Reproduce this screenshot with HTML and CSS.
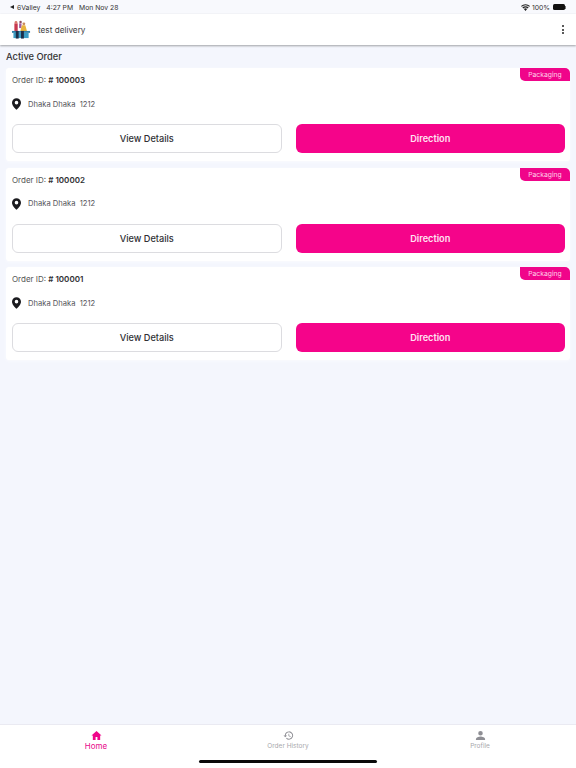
FILE: index.html
```html
<!DOCTYPE html>
<html lang="en">
<head>
<meta charset="utf-8">
<title>Active Order</title>
<link rel="stylesheet" href="styles.css">
</head>
<body>
<div class="app">
  <div class="status">
    <div class="status-left"><span class="back"></span><span>6Valley</span><span class="time">4:27 PM</span><span>Mon Nov 28</span></div>
    <div class="status-right">
      <svg class="wifi" viewBox="0 0 12 9" width="9" height="7"><path d="M6 9 3.900 6.600a3 3 0 0 1 4.200 0zM3.100 5.800 1.800 4.400a6 6 0 0 1 8.400 0L8.900 5.800a4.200 4.200 0 0 0-5.800 0zM1 3.600 0 2.500a8.500 8.500 0 0 1 12 0l-1 1.100a7 7 0 0 0-10 0z" fill="#222"/></svg>
      <span>100%</span>
      <span class="battery"></span><span class="nub"></span>
    </div>
  </div>
  <header class="header">
    <svg class="logo" viewBox="0 0 20 20" width="19" height="20">
      <rect x="2.500" y="3" width="3.500" height="8" fill="#c8384e"/>
      <circle cx="4.200" cy="2" r="1.500" fill="#d9796e"/>
      <circle cx="9" cy="1.500" r="1.300" fill="#8a4a5a"/>
      <rect x="7.500" y="3" width="2.500" height="5" fill="#a05aa0"/>
      <path d="M8.500 12 10.500 5l3.500 0 2 7z" fill="#e9b33c"/>
      <circle cx="12.500" cy="3.500" r="1.500" fill="#c98a5c"/>
      <rect x="0" y="11" width="19" height="2" fill="#2f7fa8"/>
      <rect x="1.500" y="13" width="16" height="5.500" fill="#3a9cc4"/>
      <rect x="4" y="11" width="3" height="8" fill="#1d2f4a"/>
      <rect x="9.500" y="11" width="3" height="8" fill="#1d2f4a"/>
    </svg>
    <span class="store">test delivery</span>
    <span class="menu"><i></i><i></i><i></i></span>
  </header>
  <main class="main">
    <h1 class="title">Active Order</h1>
    <div class="list">
      <article class="card">
        <span class="badge">Packaging</span>
        <div class="order">Order ID: <b># 100003</b></div>
        <div class="addr">
          <svg class="pin" viewBox="0 0 10 13" width="9" height="12"><path fill-rule="evenodd" d="M5 0a5 5 0 0 1 5 5c0 3.200-3.300 6.300-5 8-1.700-1.700-5-4.800-5-8a5 5 0 0 1 5-5zm0 3a2 2 0 1 0 0 4 2 2 0 0 0 0-4z" fill="#1b1b1f"/></svg>
          <span>Dhaka Dhaka&nbsp; 1212</span>
        </div>
        <div class="actions"><button class="btn outline">View Details</button><button class="btn solid">Direction</button></div>
      </article>
      <article class="card">
        <span class="badge">Packaging</span>
        <div class="order">Order ID: <b># 100002</b></div>
        <div class="addr">
          <svg class="pin" viewBox="0 0 10 13" width="9" height="12"><path fill-rule="evenodd" d="M5 0a5 5 0 0 1 5 5c0 3.200-3.300 6.300-5 8-1.700-1.700-5-4.800-5-8a5 5 0 0 1 5-5zm0 3a2 2 0 1 0 0 4 2 2 0 0 0 0-4z" fill="#1b1b1f"/></svg>
          <span>Dhaka Dhaka&nbsp; 1212</span>
        </div>
        <div class="actions"><button class="btn outline">View Details</button><button class="btn solid">Direction</button></div>
      </article>
      <article class="card">
        <span class="badge">Packaging</span>
        <div class="order">Order ID: <b># 100001</b></div>
        <div class="addr">
          <svg class="pin" viewBox="0 0 10 13" width="9" height="12"><path fill-rule="evenodd" d="M5 0a5 5 0 0 1 5 5c0 3.200-3.300 6.300-5 8-1.700-1.700-5-4.800-5-8a5 5 0 0 1 5-5zm0 3a2 2 0 1 0 0 4 2 2 0 0 0 0-4z" fill="#1b1b1f"/></svg>
          <span>Dhaka Dhaka&nbsp; 1212</span>
        </div>
        <div class="actions"><button class="btn outline">View Details</button><button class="btn solid">Direction</button></div>
      </article>
    </div>
  </main>
  <nav class="tabs">
    <div class="tab active">
      <svg viewBox="0 0 24 24" width="11" height="11"><path d="M12 2 1 12h3v10h6v-7h4v7h6V12h3z" fill="#f0058a"/></svg>
      <span>Home</span>
    </div>
    <div class="tab">
      <svg viewBox="0 0 24 24" width="11" height="11"><path d="M13 3a9 9 0 0 0-9 9H1l4 4 4-4H6a7 7 0 1 1 2.100 5l-1.400 1.400A9 9 0 1 0 13 3zm-1 5v5l4.300 2.500.7-1.200-3.500-2.100V8z" fill="#8e8e94"/></svg>
      <span>Order History</span>
    </div>
    <div class="tab">
      <svg viewBox="0 0 24 24" width="11" height="11"><path d="M12 12a5 5 0 1 0 0-10 5 5 0 0 0 0 10zm0 2c-4 0-10 2-10 6v2h20v-2c0-4-6-6-10-6z" fill="#8e8e94"/></svg>
      <span>Profile</span>
    </div>
    <span class="home-bar"></span>
  </nav>
</div>
</body>
</html>
```
FILE: styles.css
```css
* { box-sizing: border-box; }
html, body { margin: 0; height: 100%; }
body { font-family: Inter, "Noto Sans", sans-serif; color: #2b2b30; background: #f4f6fd; }
.app { width: 576px; height: 768px; display: flex; flex-direction: column; overflow: hidden; background: #f4f6fd; }

.status { height: 14px; flex: none; display: flex; justify-content: space-between; align-items: center; padding: 0 10px; font-size: 6.800px; color: #333; background: #f8f9fd; }
.status-left { display: flex; align-items: center; gap: 6px; }
.status-left .back { width: 0; height: 0; border: 2.500px solid transparent; border-right: 4px solid #222; border-left: 0; margin-right: -3px; }
.status-right { display: flex; align-items: center; gap: 2px; }
.battery { width: 12px; height: 6px; background: #111; border-radius: 1.500px; margin-left: 1px; }
.nub { width: 1px; height: 3px; background: #777; margin-left: -2px; }

.header { height: 31px; flex: none; display: flex; align-items: center; padding: 1px 11px 0 12px; background: #fff; box-shadow: 0 1px 2px rgba(0, 0, 0, .35); position: relative; }
.logo { flex: none; }
.store { margin-left: 7px; margin-top: -1px; font-size: 8.200px; color: #3a3a40; }
.menu { margin-left: auto; margin-right: 1px; margin-top: -1px; display: flex; flex-direction: column; gap: 1.500px; }
.menu i { width: 2px; height: 2px; border-radius: 50%; background: #222; }

.main { flex: 1; padding: 6px 6px 0; }
.title { margin: 0; height: 17px; line-height: 11px; font-size: 9.300px; font-weight: 500; color: #333; }
.list { display: flex; flex-direction: column; gap: 6.500px; }
.card { position: relative; height: 93px; padding: 6px 5px 0 6px; background: #fff; border-radius: 3px; box-shadow: 0 1px 3px #fafbfe; }
.badge { position: absolute; top: 0; right: 0; width: 50px; height: 13px; display: flex; align-items: center; justify-content: center; font-size: 6.800px; color: #ffd0e8; background: #f0058a; border-radius: 0 5px 0 5px; }
.order { height: 13px; line-height: 13px; font-size: 8px; color: #555; }
.order b { font-weight: 600; color: #2f2f33; }
.addr { display: flex; align-items: center; gap: 7px; margin-top: 10px; height: 14px; font-size: 7.600px; color: #55555a; }
.pin { flex: none; }
.actions { display: grid; grid-template-columns: 1fr 1fr; gap: 14px; margin-top: 13px; }
.btn { height: 29px; padding: 0; font: 500 9.200px Inter, "Noto Sans", sans-serif; border-radius: 6px; }
.outline { background: #fff; border: 1px solid #dcdce0; color: #2f2f33; }
.solid { background: #f5048a; border: 0; color: #ffe3f2; font-weight: 600; }

.tabs { position: relative; height: 44px; flex: none; display: flex; padding-top: 5px; background: #fff; border-top: 1px solid #eaeaf2; }
.tab { flex: 1; display: flex; flex-direction: column; align-items: center; font-size: 6.500px; color: #a8a8ac; }
.tab span { line-height: 10px; }
.tab.active { font-size: 8px; color: #e8088a; }
.home-bar { position: absolute; left: 199px; top: 35px; width: 178px; height: 3px; border-radius: 2px; background: #0a0a0a; }
```
